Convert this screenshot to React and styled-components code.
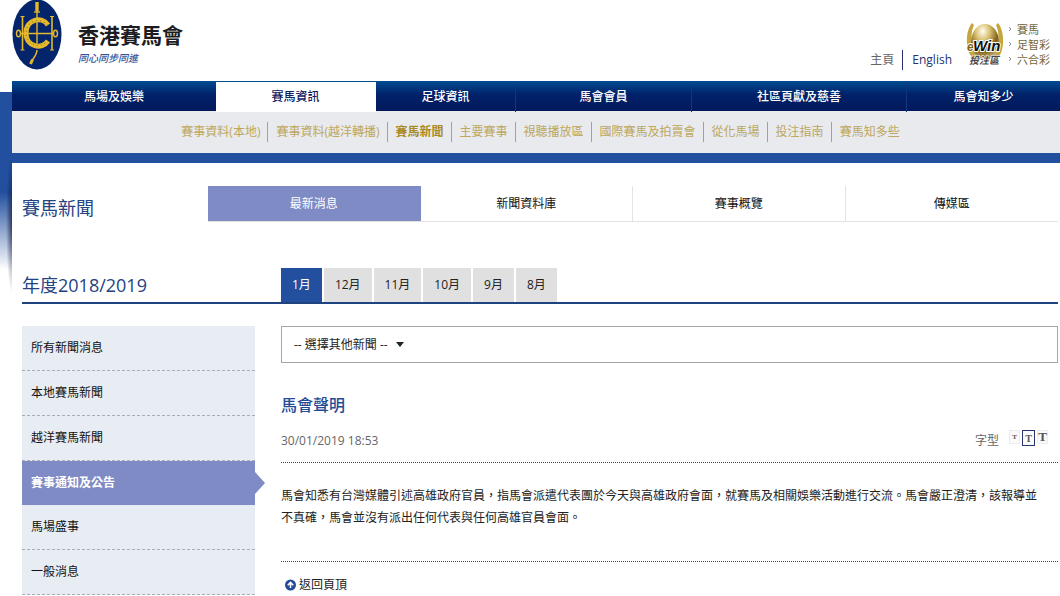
import React from 'react';
import styled, { createGlobalStyle } from 'styled-components';

const MAIN_NAV = [
  { label: '馬場及娛樂' },
  { label: '賽馬資訊', active: true },
  { label: '足球資訊' },
  { label: '馬會會員' },
  { label: '社區頁獻及慈善' },
  { label: '馬會知多少' },
];

const SUB_NAV = [
  { label: '賽事資料(本地)' },
  { label: '賽事資料(越洋轉播)' },
  { label: '賽馬新聞', active: true },
  { label: '主要賽事' },
  { label: '視聽播放區' },
  { label: '國際賽馬及拍賣會' },
  { label: '從化馬場' },
  { label: '投注指南' },
  { label: '賽馬知多些' },
];

const TABS = ['最新消息', '新聞資料庫', '賽事概覽', '傳媒區'];
const MONTHS = ['1月', '12月', '11月', '10月', '9月', '8月'];
const BETS = ['賽馬', '足智彩', '六合彩'];

const CATEGORIES = [
  { label: '所有新聞消息' },
  { label: '本地賽馬新聞' },
  { label: '越洋賽馬新聞' },
  { label: '賽事通知及公告', active: true },
  { label: '馬場盛事' },
  { label: '一般消息' },
];

export default function App() {
  return (
    <Page>
      <GlobalStyle />
      <Header />
      <Nav>
        {MAIN_NAV.map((item) => (
          <NavLink key={item.label} href="#" $active={item.active}>
            {item.label}
          </NavLink>
        ))}
      </Nav>
      <SubNav>
        {SUB_NAV.map((item) => (
          <SubLink key={item.label} href="#" $active={item.active}>
            {item.label}
          </SubLink>
        ))}
      </SubNav>
      <Main>
        <TitleRow>
          <Heading as="h1">賽馬新聞</Heading>
          <Tabs>
            {TABS.map((tab, i) => (
              <Tab key={tab} href="#" $active={i === 0}>
                {tab}
              </Tab>
            ))}
          </Tabs>
        </TitleRow>
        <YearRow>
          <Heading>年度2018/2019</Heading>
          <Months>
            {MONTHS.map((month, i) => (
              <Month key={month} type="button" $active={i === 0}>
                {month}
              </Month>
            ))}
          </Months>
        </YearRow>
        <Columns>
          <Sidebar>
            {CATEGORIES.map((item) => (
              <Category key={item.label} href="#" $active={item.active}>
                {item.label}
              </Category>
            ))}
          </Sidebar>
          <Article />
        </Columns>
      </Main>
    </Page>
  );
}

function Header() {
  return (
    <Top>
      <Brand href="#">
        <Crest />
        <BrandText>
          <BrandName>香港賽馬會</BrandName>
          <Slogan>同心同步同進</Slogan>
        </BrandText>
      </Brand>
      <Tools>
        <Language>
          <HomeLink href="#">主頁</HomeLink>
          <EnglishLink href="#">English</EnglishLink>
        </Language>
        <EwinLogo />
        <BetList>
          {BETS.map((bet) => (
            <li key={bet}>
              <Chevron viewBox="0 0 4 6">
                <path d="M1 1 L3 3 L1 5" fill="none" stroke="#8f8f9c" />
              </Chevron>
              <a href="#">{bet}</a>
            </li>
          ))}
        </BetList>
      </Tools>
    </Top>
  );
}

function Article() {
  return (
    <ArticleBox>
      <Picker>
        <PickerSelect aria-label="選擇其他新聞" defaultValue="">
          <option value="">-- 選擇其他新聞 --</option>
        </PickerSelect>
        <Caret viewBox="0 0 8 5">
          <path d="M0 0 H8 L4 5 Z" fill="#222" />
        </Caret>
      </Picker>
      <ArticleTitle>馬會聲明</ArticleTitle>
      <Meta>
        <time>30/01/2019 18:53</time>
        <FontSizes>
          <span>字型</span>
          <FontButton type="button" aria-label="小" $size={7}>T</FontButton>
          <FontButton type="button" aria-label="中" $size={10} $active>T</FontButton>
          <FontButton type="button" aria-label="大" $size={13}>T</FontButton>
        </FontSizes>
      </Meta>
      <Body>
        馬會知悉有台灣媒體引述高雄政府官員，指馬會派遣代表團於今天與高雄政府會面，就賽馬及相關娛樂活動進行交流。馬會嚴正澄清，該報導並不真確，馬會並沒有派出任何代表與任何高雄官員會面。
      </Body>
      <BackTop href="#">
        <UpIcon viewBox="0 0 12 12">
          <circle cx="6" cy="6" r="6" fill="#234b96" />
          <path d="M3 6.2 L6 3.2 L9 6.2 M6 3.6 V9.4" fill="none" stroke="#fff" strokeWidth="1.7" />
        </UpIcon>
        返回頁頂
      </BackTop>
    </ArticleBox>
  );
}

function Crest() {
  return (
    <CrestSvg viewBox="0 0 50 70">
      <ellipse cx="25" cy="34.5" rx="24.5" ry="35" fill="#04256b" />
      <g fill="none" stroke="#e3b82c">
        <path d="M25 3 V46" strokeWidth="1.4" />
        <path d="M25 2 V11" strokeWidth="3.4" />
        <path d="M22 12 H28" strokeWidth="1.4" />
        <path d="M8 33.5 H42" strokeWidth="1.4" />
        <path d="M10.5 17 V50 M40 17 V50" strokeWidth="1.6" />
        <path d="M8.5 16.5 H12.5 M8.5 50 H12.5 M38 16.5 H42 M38 50 H42" strokeWidth="1.2" />
        <ellipse cx="6.5" cy="33.5" rx="2" ry="3.2" strokeWidth="1.4" />
        <ellipse cx="43.5" cy="33.5" rx="2" ry="3.2" strokeWidth="1.4" />
        <path d="M36 25 C30 16 14 19 14 33 C14 47 30 50 36 41" strokeWidth="5" />
        <path d="M25 50 C25 55 21 58 19.5 62" strokeWidth="1.5" />
        <path d="M20.5 59.5 L18.5 64" strokeWidth="3" />
      </g>
      <path
        d="M35.5 25.500 C30 17 14 20 14 33 C14 46 30 49 35.5 40.5"
        fill="none"
        stroke="#8a6a12"
        strokeWidth="1"
        strokeDasharray="1 3"
      />
    </CrestSvg>
  );
}

function EwinLogo() {
  return (
    <EwinSvg viewBox="0 0 38 46">
      <defs>
        <radialGradient id="ball" cx="0.42" cy="0.2" r="0.85">
          <stop offset="0" stopColor="#fffef2" />
          <stop offset="0.3" stopColor="#d9c070" />
          <stop offset="0.65" stopColor="#7d5f18" />
          <stop offset="1" stopColor="#d8c88c" />
        </radialGradient>
      </defs>
      <path d="M6 1 C1 7 -1 20 3 31 C6 36 10 38 12 38 C6 28 3 14 8 3 Z" fill="#c6a63c" />
      <path d="M32 1 C37 7 39 20 35 31 C32 36 28 38 26 38 C32 28 35 14 30 3 Z" fill="#c6a63c" />
      <ellipse cx="19" cy="20" rx="14" ry="18" fill="url(#ball)" />
      <text x="1" y="29" fontFamily="Liberation Sans, sans-serif" fontWeight="700" fontStyle="italic" fontSize="12" fill="#7d6117" stroke="#fff" strokeWidth="2" paintOrder="stroke">e</text>
      <text x="7" y="29" fontFamily="Liberation Sans, sans-serif" fontWeight="700" fontStyle="italic" fontSize="15" fill="#111" stroke="#fff" strokeWidth="2" paintOrder="stroke">Win</text>
      <text x="3" y="42" fontFamily="Noto Sans CJK TC, sans-serif" fontWeight="700" fontStyle="italic" fontSize="10" fill="#4c4a46" stroke="#fff" strokeWidth="1" paintOrder="stroke">投注區</text>
    </EwinSvg>
  );
}

const GlobalStyle = createGlobalStyle`
  * {
    box-sizing: border-box;
  }

  body {
    margin: 0;
    background: #fff;
    color: #222;
    font-family: 'Open Sans', 'Noto Sans CJK TC', sans-serif;
    font-size: 12px;
    line-height: 22px;
  }

  h1, h2, h3, p, ul {
    margin: 0;
    padding: 0;
  }

  a {
    color: inherit;
    text-decoration: none;
  }

  button, select {
    font: inherit;
  }
`;

const Page = styled.div`
  padding-left: 12px;
  background:
    radial-gradient(ellipse 6px 70px at 100% 45%, rgba(0, 8, 40, 0.65), transparent) 0 160px / 12px 140px no-repeat,
    linear-gradient(#234f9f 100px, #fff 178px) 0 92px / 100% 180px no-repeat;
`;

const Top = styled.header`
  display: flex;
  justify-content: space-between;
  height: 81px;
  background: #fff;
`;

const Brand = styled.a`
  display: flex;
  align-items: flex-start;
  gap: 16px;
`;

const CrestSvg = styled.svg`
  width: 50px;
  height: 70px;
`;

const BrandText = styled.div`
  padding-top: 22px;
`;

const BrandName = styled.div`
  color: #1c1c22;
  font-size: 21px;
  font-weight: 700;
  line-height: 26px;
`;

const Slogan = styled.div`
  color: #34539b;
  font-size: 10px;
  font-style: italic;
  font-weight: 500;
  line-height: 20px;
`;

const Tools = styled.div`
  display: flex;
  align-items: flex-start;
  padding: 22px 10px 0 0;
`;

const Language = styled.div`
  display: flex;
  padding: 28px 14px 0 0;
  line-height: 20px;
`;

const HomeLink = styled.a`
  padding-right: 8px;
  border-right: 1px solid #26336f;
  color: #666;
`;

const EnglishLink = styled.a`
  padding-left: 9px;
  color: #26336f;
`;

const EwinSvg = styled.svg`
  width: 38px;
  height: 46px;
`;

const BetList = styled.ul`
  padding-left: 4px;
  color: #75683c;
  font-size: 11px;
  line-height: 15px;
  list-style: none;

  li {
    display: flex;
    gap: 5px;
  }
`;

const Chevron = styled.svg`
  width: 4px;
  height: 6px;
  margin-top: 4px;
`;

const Nav = styled.nav`
  display: grid;
  grid-template-columns: 204fr 160fr 140fr 176fr 215fr 153fr;
  height: 30px;
  padding-bottom: 1px;
  background: linear-gradient(#004d92, #012169 45%, #04195c);
`;

const NavLink = styled.a`
  border-right: 1px solid ${({ $active }) => ($active ? '#fff' : '#12367c')};
  margin-top: 1px;
  background: ${({ $active }) => ($active ? '#fff' : 'transparent')};
  color: ${({ $active }) => ($active ? '#12205f' : '#fff')};
  font-weight: 500;
  line-height: 30px;
  text-align: center;

  &:first-child,
  &:last-child {
    border-right: 0;
  }
`;

const SubNav = styled.nav`
  display: flex;
  justify-content: center;
  align-items: center;
  height: 42px;
  margin-bottom: 10px;
  padding-left: 8px;
  background: #e8eaee;
`;

const SubLink = styled.a`
  padding: 0 7px 0 8px;
  border-right: 1px solid #c0a04b;
  color: ${({ $active }) => ($active ? '#ab8a25' : '#bda75c')};
  font-weight: ${({ $active }) => ($active ? 700 : 400)};
  line-height: 20px;
  white-space: nowrap;

  &:last-child {
    border-right: 0;
  }
`;

const Main = styled.main`
  padding: 23px 2px 0 10px;
  background: #fff;
`;

const TitleRow = styled.div`
  display: grid;
  grid-template-columns: 186px 1fr;
  align-items: start;
`;

const Heading = styled.h2`
  color: #234383;
  font-size: 18px;
  font-weight: 400;
  line-height: 34px;

  ${TitleRow} & {
    padding-top: 5px;
  }
`;

const Tabs = styled.nav`
  display: grid;
  grid-template-columns: repeat(4, 1fr);
  border-bottom: 1px solid #e3e3e3;
`;

const Tab = styled.a`
  border-right: 1px solid ${({ $active }) => ($active ? '#7f8bc5' : '#e3e3e3')};
  background: ${({ $active }) => ($active ? '#7f8bc5' : '#fff')};
  color: ${({ $active }) => ($active ? '#fff' : '#111')};
  line-height: 35px;
  text-align: center;

  &:last-child {
    border-right: 0;
  }
`;

const YearRow = styled.div`
  display: grid;
  grid-template-columns: 259px 1fr;
  margin-top: 43px;
  border-bottom: 2px solid #1f437f;
`;

const Months = styled.div`
  display: flex;
  gap: 2px;
`;

const Month = styled.button`
  height: 34px;
  padding: 0 11px;
  border: 0;
  background: ${({ $active }) => ($active ? '#234f9f' : '#e0e0e0')};
  color: ${({ $active }) => ($active ? '#fff' : '#222')};
`;

const Columns = styled.div`
  display: grid;
  grid-template-columns: 233px 1fr;
  gap: 26px;
  align-items: start;
  margin-top: 22px;
`;

const Sidebar = styled.nav`
  display: flex;
  flex-direction: column;
`;

const Category = styled.a`
  position: relative;
  padding-left: 9px;
  border-bottom: ${({ $active }) => ($active ? '0' : '1px dashed #a9adb5')};
  background: ${({ $active }) => ($active ? '#7f8bc5' : '#e8edf4')};
  color: ${({ $active }) => ($active ? '#fff' : '#111')};
  font-weight: ${({ $active }) => ($active ? 700 : 400)};
  line-height: 44px;

  &::after {
    content: '';
    display: ${({ $active }) => ($active ? 'block' : 'none')};
    position: absolute;
    top: 11px;
    left: 100%;
    border: 11px solid transparent;
    border-left: 10px solid #7f8bc5;
    border-right: 0;
  }
`;

const ArticleBox = styled.article`
  display: flex;
  flex-direction: column;
`;

const Picker = styled.div`
  display: flex;
  align-items: center;
  gap: 8px;
  height: 37px;
  padding-left: 12px;
  border: 1px solid #a6a6a6;
`;

const PickerSelect = styled.select`
  padding: 0;
  border: 0;
  appearance: none;
  background: transparent;
  color: #222;
`;

const Caret = styled.svg`
  width: 8px;
  height: 5px;
`;

const ArticleTitle = styled.h3`
  margin-top: 30px;
  color: #234b96;
  font-size: 16px;
  font-weight: 500;
  line-height: 24px;
`;

const Meta = styled.div`
  display: flex;
  justify-content: space-between;
  padding: 13px 10px 10px 0;
  border-bottom: 1px dotted #444;
  color: #666;
`;

const FontSizes = styled.div`
  display: flex;
  align-items: flex-start;
  gap: 2px;

  span {
    margin-right: 8px;
  }
`;

const FontButton = styled.button`
  display: flex;
  justify-content: center;
  align-items: flex-end;
  width: ${({ $active }) => ($active ? 13 : 11)}px;
  height: ${({ $active }) => ($active ? 16 : 14)}px;
  padding: 0;
  border: 1px solid ${({ $active }) => ($active ? '#26336f' : '#ececec')};
  background: #fafafa;
  color: #555;
  font-family: 'Liberation Serif', serif;
  font-size: ${({ $size }) => $size}px;
  font-weight: 700;
  line-height: 12px;
`;

const Body = styled.p`
  padding: 22px 12px 32px 0;
  border-bottom: 1px dotted #444;
`;

const BackTop = styled.a`
  display: flex;
  align-items: center;
  gap: 3px;
  padding: 12px 0 0 4px;
`;

const UpIcon = styled.svg`
  width: 11px;
  height: 12px;
`;
